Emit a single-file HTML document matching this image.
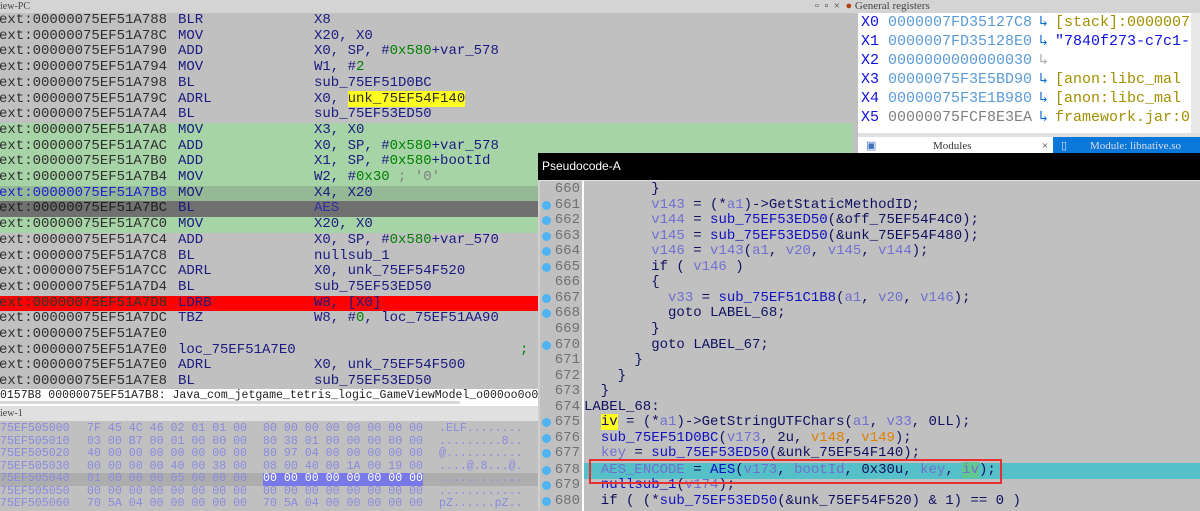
<!DOCTYPE html>
<html><head><meta charset="utf-8"><style>
*{margin:0;padding:0;box-sizing:border-box}
body{width:1200px;height:511px;overflow:hidden;background:#c0c0c0;position:relative;font-family:"Liberation Mono",monospace}
.a{position:absolute;white-space:pre}
.r{position:absolute;left:0;width:853px;height:15.7px;font-size:14px;line-height:15.7px;color:#1a1a80;white-space:pre}
.r span{position:absolute}
.ad{left:-1px;color:#303030}
.mn{left:178px}
.op{left:314px}
.g{background:#a7d4a7}
.n{color:#008000}
.c{color:#808080}
.h{position:absolute;left:0;width:540px;height:12.5px;font-size:11.6px;line-height:12.5px;color:#8a8ae0;white-space:pre}
.h span{position:absolute}
.p{position:absolute;left:538px;width:662px;height:15.55px;font-size:14px;line-height:15.55px;color:#101060;white-space:pre}
.p .d{position:absolute;left:4px;top:3px;width:9px;height:9px;border-radius:50%;background:#4fb4f4}
.p .ln{position:absolute;left:12px;width:30px;text-align:right;color:#707070}
.p .cd{position:absolute;left:46px}
.v{color:#7070d0}
.f{color:#1010c0}
.o{color:#e08000}
.reg{position:absolute;left:861px;font-size:15px;line-height:19px;white-space:pre;font-family:"Liberation Mono",monospace}
.reg b{font-weight:normal;position:absolute;left:178px}
.reg i{font-style:normal;position:absolute;left:194px}
</style></head><body>
<div class="a" style="left:0;top:0;width:1200px;height:13px;background:#d4d4d4;font-size:10px;line-height:13px;color:#444;font-family:'Liberation Serif',serif">iew-PC</div>
<div class="a" style="left:815px;top:0;font-size:11px;line-height:13px;color:#444;font-family:'Liberation Serif',serif">▫  ▫  ×  <span style="color:#b04010">●</span> General registers</div>

<div class="r" style="top:13px"><span class="ad">ext:00000075EF51A788</span><span class="mn">BLR</span><span class="op">X8</span></div>
<div class="r" style="top:28.7px"><span class="ad">ext:00000075EF51A78C</span><span class="mn">MOV</span><span class="op">X20, X0</span></div>
<div class="r" style="top:44.4px"><span class="ad">ext:00000075EF51A790</span><span class="mn">ADD</span><span class="op">X0, SP, #<span class="n" style="position:static">0x580</span>+var_578</span></div>
<div class="r" style="top:60.1px"><span class="ad">ext:00000075EF51A794</span><span class="mn">MOV</span><span class="op">W1, #<span class="n" style="position:static">2</span></span></div>
<div class="r" style="top:75.8px"><span class="ad">ext:00000075EF51A798</span><span class="mn">BL</span><span class="op">sub_75EF51D0BC</span></div>
<div class="r" style="top:91.5px"><span class="ad">ext:00000075EF51A79C</span><span class="mn">ADRL</span><span class="op">X0, <span style="position:static;background:#ffff20;color:#303030">unk_75EF54F140</span></span></div>
<div class="r" style="top:107.2px"><span class="ad">ext:00000075EF51A7A4</span><span class="mn">BL</span><span class="op">sub_75EF53ED50</span></div>
<div class="r g" style="top:122.9px"><span class="ad">ext:00000075EF51A7A8</span><span class="mn">MOV</span><span class="op">X3, X0</span></div>
<div class="r g" style="top:138.6px"><span class="ad">ext:00000075EF51A7AC</span><span class="mn">ADD</span><span class="op">X0, SP, #<span class="n" style="position:static">0x580</span>+var_578</span></div>
<div class="r g" style="top:154.3px"><span class="ad">ext:00000075EF51A7B0</span><span class="mn">ADD</span><span class="op">X1, SP, #<span class="n" style="position:static">0x580</span>+bootId</span></div>
<div class="r g" style="top:170px"><span class="ad">ext:00000075EF51A7B4</span><span class="mn">MOV</span><span class="op">W2, #<span class="n" style="position:static">0x30</span> <span class="c" style="position:static">; '0'</span></span></div>
<div class="r" style="top:185.7px;background:#95b995"><span class="ad" style="color:#2020d0">ext:00000075EF51A7B8</span><span class="mn">MOV</span><span class="op">X4, X20</span></div>
<div class="r" style="top:201.4px;background:#707070"><span class="ad" style="color:#202020">ext:00000075EF51A7BC</span><span class="mn">BL</span><span class="op" style="color:#3030a0">AES</span></div>
<div class="r g" style="top:217.1px"><span class="ad">ext:00000075EF51A7C0</span><span class="mn">MOV</span><span class="op">X20, X0</span></div>
<div class="r" style="top:232.8px"><span class="ad">ext:00000075EF51A7C4</span><span class="mn">ADD</span><span class="op">X0, SP, #<span class="n" style="position:static">0x580</span>+var_570</span></div>
<div class="r" style="top:248.5px"><span class="ad">ext:00000075EF51A7C8</span><span class="mn">BL</span><span class="op">nullsub_1</span></div>
<div class="r" style="top:264.2px"><span class="ad">ext:00000075EF51A7CC</span><span class="mn">ADRL</span><span class="op">X0, unk_75EF54F520</span></div>
<div class="r" style="top:279.9px"><span class="ad">ext:00000075EF51A7D4</span><span class="mn">BL</span><span class="op">sub_75EF53ED50</span></div>
<div class="r" style="top:295.6px;background:#ff0000"><span class="ad">ext:00000075EF51A7D8</span><span class="mn">LDRB</span><span class="op">W8, [X0]</span></div>
<div class="r" style="top:311.3px"><span class="ad">ext:00000075EF51A7DC</span><span class="mn">TBZ</span><span class="op">W8, #<span class="n" style="position:static">0</span>, loc_75EF51AA90</span></div>
<div class="r" style="top:327px"><span class="ad">ext:00000075EF51A7E0</span></div>
<div class="r" style="top:342.7px"><span class="ad">ext:00000075EF51A7E0</span><span class="mn">loc_75EF51A7E0</span><span class="n" style="left:520px">;</span></div>
<div class="r" style="top:358.4px"><span class="ad">ext:00000075EF51A7E0</span><span class="mn">ADRL</span><span class="op">X0, unk_75EF54F500</span></div>
<div class="r" style="top:374.1px"><span class="ad">ext:00000075EF51A7E8</span><span class="mn">BL</span><span class="op">sub_75EF53ED50</span></div>

<div class="a" style="left:0;top:389px;width:540px;height:14px;background:#fff;font-size:11.5px;line-height:14px;color:#222">0157B8 00000075EF51A7B8: Java_com_jetgame_tetris_logic_GameViewModel_o000oo0o0o0+BCC (Synchronized</div>
<div class="a" style="left:0;top:403px;width:540px;height:3px;background:#fff"></div>
<div class="a" style="left:0;top:401px;width:460px;height:3px;background:#d8d8d8"></div>
<div class="a" style="left:0;top:406px;width:540px;height:15px;background:#e0e0e0;font-size:10px;line-height:15px;color:#444;font-family:'Liberation Serif',serif">iew-1</div>

<div class="h" style="top:423px"><span style="left:0">75EF505000</span><span style="left:87px">7F 45 4C 46 02 01 01 00</span><span style="left:263px">00 00 00 00 00 00 00 00</span><span style="left:439px">.ELF........</span></div>
<div class="h" style="top:435.5px"><span style="left:0">75EF505010</span><span style="left:87px">03 00 B7 00 01 00 00 00</span><span style="left:263px">80 38 01 00 00 00 00 00</span><span style="left:439px">.........8..</span></div>
<div class="h" style="top:448px"><span style="left:0">75EF505020</span><span style="left:87px">40 00 00 00 00 00 00 00</span><span style="left:263px">80 97 04 00 00 00 00 00</span><span style="left:439px">@...........</span></div>
<div class="h" style="top:460.5px"><span style="left:0">75EF505030</span><span style="left:87px">00 00 00 00 40 00 38 00</span><span style="left:263px">08 00 40 00 1A 00 19 00</span><span style="left:439px">....@.8...@.</span></div>
<div class="h" style="top:473px;background:#adadad"><span style="left:0">75EF505040</span><span style="left:87px">01 00 00 00 05 00 00 00</span><span style="left:263px;background:#7878e8;color:#fff">00 00 00 00 00 00 00 00</span><span style="left:439px">............</span></div>
<div class="h" style="top:485.5px"><span style="left:0">75EF505050</span><span style="left:87px">00 00 00 00 00 00 00 00</span><span style="left:263px">00 00 00 00 00 00 00 00</span><span style="left:439px">............</span></div>
<div class="h" style="top:498px"><span style="left:0">75EF505060</span><span style="left:87px">70 5A 04 00 00 00 00 00</span><span style="left:263px">70 5A 04 00 00 00 00 00</span><span style="left:439px">pZ......pZ..</span></div>

<!-- registers -->
<div class="a" style="left:858px;top:13px;width:342px;height:120px;background:#fff"></div>
<div class="reg" style="top:13px"><span style="color:#1010e0">X0</span> <span style="color:#5b9bd5">0000007FD35127C8</span><b style="color:#1070d0">↳</b><i style="color:#a09000">[stack]:0000007</i></div>
<div class="reg" style="top:32px"><span style="color:#1010e0">X1</span> <span style="color:#5b9bd5">0000007FD35128E0</span><b style="color:#1070d0">↳</b><i style="color:#1010e0">"7840f273-c7c1-</i></div>
<div class="reg" style="top:51px"><span style="color:#1010e0">X2</span> <span style="color:#5b9bd5">0000000000000030</span><b style="color:#aaa">↳</b></div>
<div class="reg" style="top:70px"><span style="color:#1010e0">X3</span> <span style="color:#5b9bd5">00000075F3E5BD90</span><b style="color:#1070d0">↳</b><i style="color:#a09000">[anon:libc_mal</i></div>
<div class="reg" style="top:89px"><span style="color:#1010e0">X4</span> <span style="color:#5b9bd5">00000075F3E1B980</span><b style="color:#1070d0">↳</b><i style="color:#a09000">[anon:libc_mal</i></div>
<div class="reg" style="top:108px"><span style="color:#1010e0">X5</span> <span style="color:#808080">00000075FCF8E3EA</span><b style="color:#1070d0">↳</b><i style="color:#a09000">framework.jar:0</i></div>
<div class="a" style="left:1191px;top:13px;width:9px;height:120px;background:#e8e8e8"></div>
<div class="a" style="left:858px;top:133px;width:342px;height:4px;background:#e0e0e0"></div>
<div class="a" style="left:858px;top:137px;width:195px;height:16px;background:#fff;font-size:11px;line-height:18px;color:#333;font-family:'Liberation Serif',serif"><span class="a" style="left:8px;color:#4070c0">▣</span><span class="a" style="left:75px">Modules</span><span class="a" style="left:184px">×</span></div>
<div class="a" style="left:1053px;top:137px;width:147px;height:16px;background:#0a78d8;font-size:11px;line-height:18px;color:#dde;font-family:'Liberation Serif',serif"><span class="a" style="left:8px">▯</span><span class="a" style="left:37px">Module: libnative.so</span></div>

<!-- pseudocode -->
<div class="a" style="left:538px;top:153px;width:662px;height:27px;background:#000;color:#fff;font-family:'Liberation Sans',sans-serif;font-size:12px;line-height:26px;padding-left:4px">Pseudocode-A</div>
<div class="a" style="left:538px;top:180px;width:662px;height:331px;background:#c0c0c0;border-top:1px solid #e0e0e0;border-left:2px solid #d0d0d0"></div>
<div class="a" style="left:582px;top:181px;width:2px;height:330px;background:#fff"></div>
<div class="a" style="left:584px;top:463px;width:616px;height:15.5px;background:#56c0c8"></div>

<div class="p" style="top:182px"><span class="ln">660</span><span class="cd">        }</span></div>
<div class="p" style="top:197.55px"><i class="d"></i><span class="ln">661</span><span class="cd">        <span class="v">v143</span> = (*<span class="v">a1</span>)-&gt;GetStaticMethodID;</span></div>
<div class="p" style="top:213.1px"><i class="d"></i><span class="ln">662</span><span class="cd">        <span class="v">v144</span> = <span class="f">sub_75EF53ED50</span>(&amp;off_75EF54F4C0);</span></div>
<div class="p" style="top:228.65px"><i class="d"></i><span class="ln">663</span><span class="cd">        <span class="v">v145</span> = <span class="f">sub_75EF53ED50</span>(&amp;unk_75EF54F480);</span></div>
<div class="p" style="top:244.2px"><i class="d"></i><span class="ln">664</span><span class="cd">        <span class="v">v146</span> = <span class="v">v143</span>(<span class="v">a1</span>, <span class="v">v20</span>, <span class="v">v145</span>, <span class="v">v144</span>);</span></div>
<div class="p" style="top:259.75px"><i class="d"></i><span class="ln">665</span><span class="cd">        if ( <span class="v">v146</span> )</span></div>
<div class="p" style="top:275.3px"><span class="ln">666</span><span class="cd">        {</span></div>
<div class="p" style="top:290.85px"><i class="d"></i><span class="ln">667</span><span class="cd">          <span class="v">v33</span> = <span class="f">sub_75EF51C1B8</span>(<span class="v">a1</span>, <span class="v">v20</span>, <span class="v">v146</span>);</span></div>
<div class="p" style="top:306.4px"><i class="d"></i><span class="ln">668</span><span class="cd">          goto LABEL_68;</span></div>
<div class="p" style="top:321.95px"><span class="ln">669</span><span class="cd">        }</span></div>
<div class="p" style="top:337.5px"><i class="d"></i><span class="ln">670</span><span class="cd">        goto LABEL_67;</span></div>
<div class="p" style="top:353.05px"><span class="ln">671</span><span class="cd">      }</span></div>
<div class="p" style="top:368.6px"><span class="ln">672</span><span class="cd">    }</span></div>
<div class="p" style="top:384.15px"><span class="ln">673</span><span class="cd">  }</span></div>
<div class="p" style="top:399.7px"><span class="ln">674</span><span class="cd">LABEL_68:</span></div>
<div class="p" style="top:415.25px"><i class="d"></i><span class="ln">675</span><span class="cd">  <span style="background:#ffff20">iv</span> = (*<span class="v">a1</span>)-&gt;GetStringUTFChars(<span class="v">a1</span>, <span class="v">v33</span>, 0LL);</span></div>
<div class="p" style="top:430.8px"><i class="d"></i><span class="ln">676</span><span class="cd">  <span class="f">sub_75EF51D0BC</span>(<span class="v">v173</span>, 2u, <span class="o">v148</span>, <span class="o">v149</span>);</span></div>
<div class="p" style="top:446.35px"><i class="d"></i><span class="ln">677</span><span class="cd">  <span class="v">key</span> = <span class="f">sub_75EF53ED50</span>(&amp;unk_75EF54F140);</span></div>
<div class="p" style="top:462.9px"><i class="d"></i><span class="ln">678</span><span class="cd">  <span class="v">AES_ENCODE</span> = <span class="f">AES</span>(<span class="v">v173</span>, <span class="v">bootId</span>, 0x30u, <span class="v">key</span>, <span class="v" style="background:#60c890">iv</span>);</span></div>
<div class="p" style="top:478.45px"><i class="d"></i><span class="ln">679</span><span class="cd">  <span class="f">nullsub_1</span>(<span class="v">v174</span>);</span></div>
<div class="p" style="top:494px"><i class="d"></i><span class="ln">680</span><span class="cd">  if ( (*<span class="f">sub_75EF53ED50</span>(&amp;unk_75EF54F520) &amp; 1) == 0 )</span></div>
<div class="a" style="left:589px;top:459px;width:413px;height:25px;border:2px solid #e83030"></div>
</body></html>
